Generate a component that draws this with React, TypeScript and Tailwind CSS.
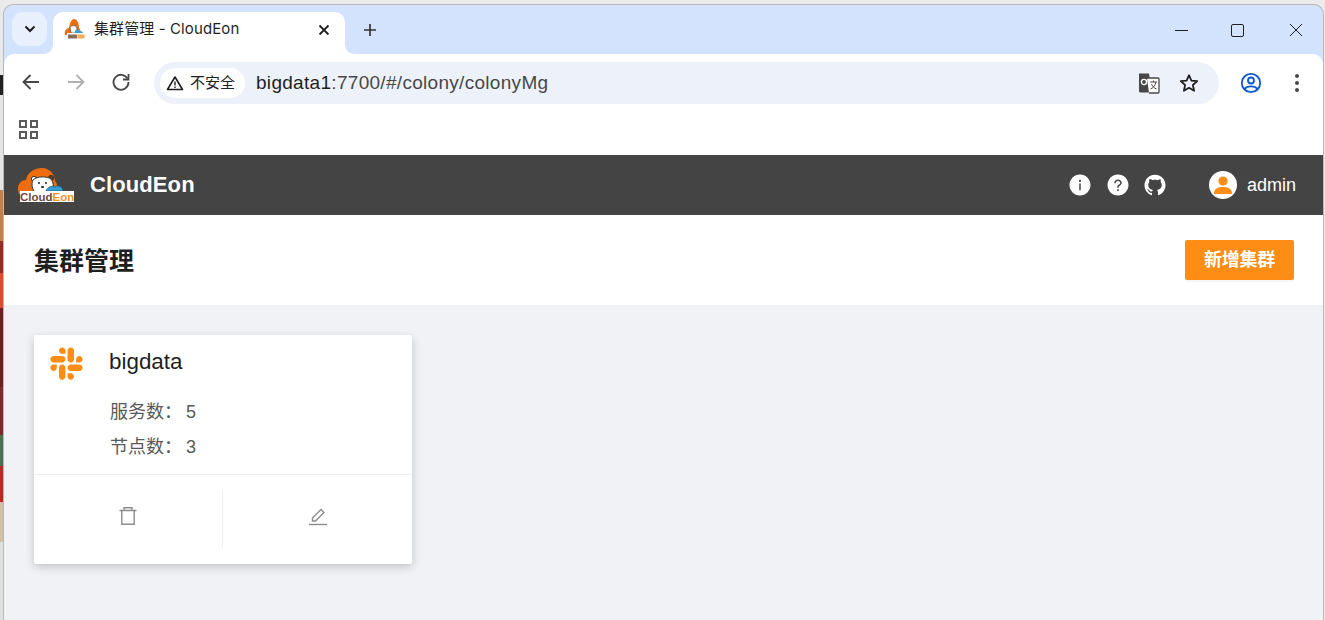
import { AiOutlineSlack, AiFillInfoCircle, AiFillQuestionCircle, AiOutlineGithub } from 'react-icons/ai'

const uiFont = "font-['Liberation_Sans','Noto_Sans_CJK_SC',sans-serif]"

const desktopStrip = [
  { height: 'h-[75px]', color: 'bg-[#e9e9e9]' },
  { height: 'h-[20px]', color: 'bg-[#222222]' },
  { height: 'h-[95px]', color: 'bg-[#e4e4e4]' },
  { height: 'h-[51px]', color: 'bg-[#c08050]' },
  { height: 'h-[32px]', color: 'bg-[#8a3020]' },
  { height: 'h-[35px]', color: 'bg-[#d05030]' },
  { height: 'h-[79px]', color: 'bg-[#6a2020]' },
  { height: 'h-[48px]', color: 'bg-[#7a2a2a]' },
  { height: 'h-[31px]', color: 'bg-[#4a7050]' },
  { height: 'h-[36px]', color: 'bg-[#b03020]' },
  { height: 'h-[40px]', color: 'bg-[#d0c0a8]' },
  { height: 'flex-1', color: 'bg-[#e0e0e0]' },
]

function TabFlare({ side }: { side: 'left' | 'right' }) {
  return (
    <svg
      width="10"
      height="10"
      viewBox="0 0 10 10"
      className={side === 'left' ? 'absolute bottom-0 left-[-10px]' : 'absolute bottom-0 right-[-10px]'}
    >
      <path d={side === 'left' ? 'M10 0V10H0C6 10 10 6 10 0Z' : 'M0 0V10H10C4 10 0 6 0 0Z'} fill="#fff" />
    </svg>
  )
}

function TabLogo() {
  return (
    <svg width="21" height="21" viewBox="0 0 21 21" className="shrink-0">
      <path d="M1 16C0 11 3 9 5 9C6 3 8 0 10 0C13 0 15 4 15 9C17 11 17 14 16 16Z" fill="#ee6c0a" />
      <path d="M6 8C8 6 12 6 13 9L12.500 14H7Z" fill="#fff" stroke="#444" strokeWidth="0.7" />
      <path d="M11 12C12 10 15 10 16 12C18 12 19 13 19 14H11Z" fill="#3a9fd4" />
      <rect x="3" y="14" width="18" height="7" fill="#fff" />
      <rect x="4" y="15.500" width="9" height="4" fill="#8a6a58" />
      <rect x="13.500" y="15.500" width="7" height="4" fill="#f7ab55" />
    </svg>
  )
}

function HeaderLogo() {
  return (
    <div className="relative w-[56px] h-[36px] shrink-0">
      <svg width="56" height="36" viewBox="0 0 56 36" className="absolute left-0 top-0">
        <path d="M1 27C-2 19 2 13 8 13C9 5 17 1 24 1C32 1 37 8 37 14C40 17 40 22 38 27Z" fill="#ef6c0b" />
        <circle cx="16" cy="12" r="2.600" fill="#fff" stroke="#333" strokeWidth="1" />
        <circle cx="33" cy="11" r="2.600" fill="#6b3a1a" stroke="#333" strokeWidth="1" />
        <path d="M15 13C19 9 29 9 33 12C36 16 36 22 33 26H18C14 23 13 17 15 13Z" fill="#fff" stroke="#333" strokeWidth="1" />
        <circle cx="21" cy="16" r="1" fill="#222" />
        <circle cx="28" cy="16" r="1" fill="#222" />
        <ellipse cx="24.500" cy="20" rx="1.600" ry="1.100" fill="#222" />
        <path d="M28 24C29 20 34 18 37 20C40 17 45 20 45 24Z" fill="#2f9fd8" stroke="#333" strokeWidth="0.5" />
        <rect x="2" y="24" width="54" height="11" fill="#fff" />
      </svg>
      <span className="absolute left-[2px] top-[25px] text-[11.500px] leading-[11px] font-bold font-['Liberation_Sans',sans-serif] text-[#6b4a3a]">
        Cloud<span className="text-[#f5941d]">Eon</span>
      </span>
    </div>
  )
}

function ChromeIcon({ children, className = '' }: { children: React.ReactNode; className?: string }) {
  return (
    <svg width="24" height="24" viewBox="0 0 24 24" fill="none" className={className}>
      {children}
    </svg>
  )
}

function TabStrip() {
  return (
    <div className="h-[49px] flex items-end pl-[8px] pr-[20px] shrink-0">
      <div className="w-[35px] h-[34px] mb-[8px] rounded-[11px] bg-[#e9f0fd] flex items-center justify-center">
        <svg width="12" height="8" viewBox="0 0 12 8" fill="none">
          <path d="M1.500 1.500L6 6L10.500 1.500" stroke="#1f1f1f" strokeWidth="2" />
        </svg>
      </div>
      <div className="relative ml-[6px] w-[292px] h-[42px] bg-white rounded-t-[10px] flex items-center pl-[11px] pr-[15px] pb-[7px]">
        <TabFlare side="left" />
        <TabFlare side="right" />
        <TabLogo />
        <span className="ml-[9px] text-[15px] tracking-[0.1px] text-[#1f1f1f] font-['Inter','Noto_Sans_CJK_SC',sans-serif]">集群管理 - CloudEon</span>
        <svg width="12" height="12" viewBox="0 0 12 12" fill="none" className="ml-auto">
          <path d="M1.500 1.500L10.500 10.500M10.500 1.500L1.500 10.500" stroke="#1f1f1f" strokeWidth="1.800" />
        </svg>
      </div>
      <svg width="14" height="14" viewBox="0 0 14 14" fill="none" className="ml-[18px] mb-[17px]">
        <path d="M7 1V13M1 7H13" stroke="#333" strokeWidth="1.700" />
      </svg>
      <div className="ml-auto flex items-center mb-[17px]">
        <div className="w-[13px] h-[1px] bg-[#1f1f1f]" />
        <div className="ml-[43px] w-[13px] h-[13px] border border-[#1f1f1f] rounded-[2px]" />
        <svg width="14" height="14" viewBox="0 0 14 14" fill="none" className="ml-[45px]">
          <path d="M1 1L13 13M13 1L1 13" stroke="#1f1f1f" strokeWidth="1" />
        </svg>
      </div>
    </div>
  )
}

function Toolbar() {
  return (
    <div className="h-[54px] bg-white rounded-t-[10px] flex items-center pl-[15px] pr-[15px] pt-[4px] shrink-0">
      <ChromeIcon className="mb-[2px]">
        <path d="M20 12H5M11.500 5L4.500 12L11.500 19" stroke="#474747" strokeWidth="1.800" />
      </ChromeIcon>
      <ChromeIcon className="ml-[21px] mb-[2px]">
        <path d="M4 12H19M12.500 5L19.500 12L12.500 19" stroke="#b0b0b0" strokeWidth="1.800" />
      </ChromeIcon>
      <ChromeIcon className="ml-[21px] mb-[2px]">
        <path d="M18.500 8.500A7.500 7.500 0 1 0 19.500 12" stroke="#474747" strokeWidth="1.800" />
        <path d="M19.500 4V9.500H14" stroke="#474747" strokeWidth="1.800" />
      </ChromeIcon>
      <div className="ml-[21px] flex-1 h-[42px] rounded-full bg-[#edf2fa] flex items-center pl-[6px] pr-[19px]">
        <div className="h-[30px] w-[85px] rounded-full bg-white flex items-center pl-[6px] gap-[6px]">
          <svg width="18" height="16" viewBox="0 0 18 16" fill="none">
            <path d="M9 2L16.500 14.500H1.500Z" stroke="#1f1f1f" strokeWidth="1.600" strokeLinejoin="round" />
            <path d="M9 6.500V10.500M9 11.500V13" stroke="#1f1f1f" strokeWidth="1.400" />
          </svg>
          <span className={`text-[15px] text-[#1f1f1f] whitespace-nowrap ${uiFont}`}>不安全</span>
        </div>
        <span className={`ml-[11px] text-[19px] tracking-[0.3px] text-[#474747] ${uiFont}`}>
          <span className="text-[#1f1f1f]">bigdata1</span>:7700/#/colony/colonyMg
        </span>
        <svg width="22" height="22" viewBox="0 0 22 22" fill="none" className="ml-auto">
          <path d="M1 1.500H11L14 20.500H2.500Q1 20.500 1 19Z" fill="#474747" />
          <path d="M9 6H20Q21 6 21 7V20Q21 21 20 21H11" fill="#fff" stroke="#474747" strokeWidth="1.300" />
          <circle cx="6" cy="10" r="2.600" stroke="#fff" strokeWidth="1.300" />
          <path d="M12 10H19M15.500 8.500V10M18 10C17 14 15 16 12.500 17M13.500 12C14.500 14.500 16 16 18.500 17" stroke="#474747" strokeWidth="1" />
        </svg>
        <svg width="22" height="22" viewBox="0 0 24 24" fill="none" className="ml-[18px]">
          <path d="M12 3.500L14.600 9.400L21 10L16.200 14.200L17.600 20.500L12 17.200L6.400 20.500L7.800 14.200L3 10L9.400 9.400Z" stroke="#1f1f1f" strokeWidth="1.900" strokeLinejoin="round" />
        </svg>
      </div>
      <svg width="22" height="22" viewBox="0 0 22 22" fill="none" className="ml-[21px]">
        <circle cx="11" cy="11" r="9.200" stroke="#0b57d0" strokeWidth="1.800" />
        <circle cx="11" cy="8.500" r="3" stroke="#0b57d0" strokeWidth="1.800" />
        <path d="M4.500 17C7 13.500 15 13.500 17.500 17" stroke="#0b57d0" strokeWidth="1.800" />
      </svg>
      <div className="ml-[33px] mr-[9px] flex flex-col gap-[3px]">
        <div className="w-[4px] h-[4px] rounded-full bg-[#474747]" />
        <div className="w-[4px] h-[4px] rounded-full bg-[#474747]" />
        <div className="w-[4px] h-[4px] rounded-full bg-[#474747]" />
      </div>
    </div>
  )
}

function BookmarkBar() {
  return (
    <div className="h-[47px] bg-white flex items-center pl-[15px] pb-[4px] shrink-0">
      <div className="grid grid-cols-2 gap-[3px]">
        <div className="w-[8px] h-[8px] border-2 border-[#5a5a5a]" />
        <div className="w-[8px] h-[8px] border-2 border-[#5a5a5a]" />
        <div className="w-[8px] h-[8px] border-2 border-[#5a5a5a]" />
        <div className="w-[8px] h-[8px] border-2 border-[#5a5a5a]" />
      </div>
    </div>
  )
}

function AppHeader() {
  return (
    <div className={`h-[60px] bg-[#444444] flex items-center pl-[14px] pr-[27px] text-white shrink-0 ${uiFont}`}>
      <HeaderLogo />
      <span className="ml-[16px] text-[22px] font-bold tracking-[0.1px] pb-[2px]">CloudEon</span>
      <div className="ml-auto flex items-center">
        <AiFillInfoCircle size={24} />
        <AiFillQuestionCircle size={24} className="ml-[14px]" />
        <AiOutlineGithub size={24} className="ml-[13px]" />
        <div className="ml-[42px] w-[28px] h-[28px] rounded-full bg-white overflow-hidden flex items-center justify-center">
          <svg width="28" height="28" viewBox="0 0 28 28">
            <circle cx="14" cy="10" r="4.600" fill="#fd8d14" />
            <path d="M5 23C5 17.500 9 16 14 16C19 16 23 17.500 23 23Z" fill="#fd8d14" />
          </svg>
        </div>
        <span className="ml-[10px] text-[18px]">admin</span>
      </div>
    </div>
  )
}

function ClusterCard() {
  return (
    <div className="w-[378px] h-[229px] bg-white rounded-[2px] shadow-[0_3px_10px_rgba(0,0,0,0.2)] flex flex-col">
      <div className="h-[139px] flex pl-[11px] pt-[7px]">
        <AiOutlineSlack size={43} className="text-[#fd8d14] shrink-0" />
        <div className="ml-[21px] mt-[2px]">
          <div className="text-[22.4px] leading-[36px] text-[#1f1f1f]">bigdata</div>
          <div className="mt-[15px] ml-px text-[18px] leading-[35px] text-[#595959]">
            <div>服务数：<span className="ml-[4px]">5</span></div>
            <div>节点数：<span className="ml-[4px]">3</span></div>
          </div>
        </div>
      </div>
      <div className="flex-1 border-t border-[#f0f0f0] flex items-center pb-[2px]">
        <div className="w-1/2 h-[58px] flex items-center justify-center border-r border-[#f0f0f0] pb-[5px]">
          <svg width="20" height="20" viewBox="0 0 20 20" fill="none" stroke="#8c8c8c" strokeWidth="1.400">
            <path d="M1.500 4.500H18.500M6 4.500V1.800H14V4.500M3.800 4.500V18.200H16.200V4.500" />
          </svg>
        </div>
        <div className="w-1/2 h-[58px] flex items-center justify-center pb-[5px]">
          <svg width="20" height="20" viewBox="0 0 20 20" fill="none" stroke="#8c8c8c" strokeWidth="1.400">
            <path d="M4.500 15V12L13 3.500L16 6.500L7.500 15Z" />
            <path d="M1 18.500H19" />
          </svg>
        </div>
      </div>
    </div>
  )
}

export default function App() {
  return (
    <div className="w-[1325px] h-[620px] overflow-hidden flex bg-[#ebebeb]">
      <div className="w-[3px] flex flex-col shrink-0">
        {desktopStrip.map((segment, i) => (
          <div key={i} className={`${segment.height} ${segment.color}`} />
        ))}
      </div>
      <div className="flex-1 mt-[4px] mr-px flex flex-col rounded-t-[10px] bg-[#d3e3fd] overflow-hidden border-x border-t border-[#b8b8b8]">
        <TabStrip />
        <Toolbar />
        <BookmarkBar />
        <AppHeader />
        <div className={`h-[90px] bg-white flex items-center justify-between pl-[30px] pr-[29px] shrink-0 ${uiFont}`}>
          <h1 className="text-[25px] font-bold text-[#1f1f1f] pt-[3px]">集群管理</h1>
          <button className="w-[109px] h-[40px] rounded-[2px] bg-[#fd8d14] text-white text-[18px] font-bold tracking-[-0.2px] shadow-[0_2px_0_rgba(0,0,0,0.04)]">
            新增集群
          </button>
        </div>
        <div className={`flex-1 bg-[#f0f2f5] pl-[30px] pt-[30px] ${uiFont}`}>
          <ClusterCard />
        </div>
      </div>
    </div>
  )
}
